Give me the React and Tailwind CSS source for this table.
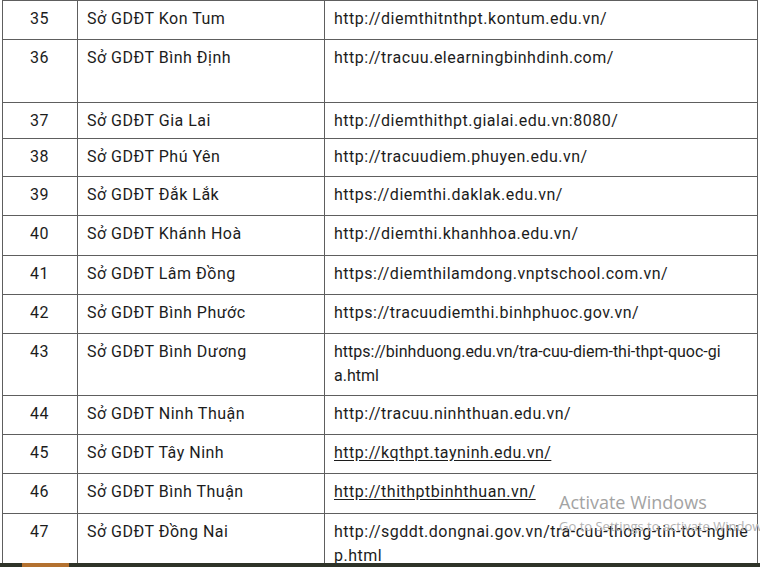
import React from "react";

const rows = [
  { n: "35", name: "Sở GDĐT Kon Tum", url: ["http://diemthitnthpt.kontum.edu.vn/"], h: "h-[39px]" },
  { n: "36", name: "Sở GDĐT Bình Định", url: ["http://tracuu.elearningbinhdinh.com/"], h: "h-[63px]" },
  { n: "37", name: "Sở GDĐT Gia Lai", url: ["http://diemthithpt.gialai.edu.vn:8080/"], h: "h-[36px]" },
  { n: "38", name: "Sở GDĐT Phú Yên", url: ["http://tracuudiem.phuyen.edu.vn/"], h: "h-[38px]" },
  { n: "39", name: "Sở GDĐT Đắk Lắk", url: ["https://diemthi.daklak.edu.vn/"], h: "h-[39px]" },
  { n: "40", name: "Sở GDĐT Khánh Hoà", url: ["http://diemthi.khanhhoa.edu.vn/"], h: "h-[40px]" },
  { n: "41", name: "Sở GDĐT Lâm Đồng", url: ["https://diemthilamdong.vnptschool.com.vn/"], h: "h-[39px]" },
  { n: "42", name: "Sở GDĐT Bình Phước", url: ["https://tracuudiemthi.binhphuoc.gov.vn/"], h: "h-[39px]" },
  { n: "43", name: "Sở GDĐT Bình Dương", url: ["https://binhduong.edu.vn/tra-cuu-diem-thi-thpt-quoc-gi", "a.html"], h: "h-[62px]", narrow: true },
  { n: "44", name: "Sở GDĐT Ninh Thuận", url: ["http://tracuu.ninhthuan.edu.vn/"], h: "h-[39px]" },
  { n: "45", name: "Sở GDĐT Tây Ninh", url: ["http://kqthpt.tayninh.edu.vn/"], h: "h-[39px]", link: true },
  { n: "46", name: "Sở GDĐT Bình Thuận", url: ["http://thithptbinhthuan.vn/"], h: "h-[40px]", link: true },
  { n: "47", name: "Sở GDĐT Đồng Nai", url: ["http://sgddt.dongnai.gov.vn/tra-cuu-thong-tin-tot-nghie", "p.html"], h: "h-[62px]" },
];

export default function App() {
  return (
    <div className="relative w-[760px] h-[567px] overflow-hidden bg-white text-[#1c1c1c] font-['Roboto',_'Liberation_Sans',_sans-serif] text-[16px] leading-[24px] tracking-[0.5px]">
      <div className="ml-[2px] w-[756px] border-l border-t border-[#5e5e5e]">
        {rows.map((r) => (
          <div key={r.n} className={`grid grid-cols-[75px_247px_433px] ${r.h}`}>
            <div className="border-r border-b border-[#5e5e5e] pt-[6px] text-center pr-[1px]">{r.n}</div>
            <div className="border-r border-b border-[#5e5e5e] pt-[6px] pl-[9px]">{r.name}</div>
            <div className={`border-r border-b border-[#5e5e5e] pt-[6px] pl-[9px] whitespace-nowrap ${r.narrow ? "tracking-normal" : ""}`}>
              {r.url.map((u, i) => (
                <div key={i} className={r.link ? "underline underline-offset-2" : ""}>{u}</div>
              ))}
            </div>
          </div>
        ))}
      </div>

      <div className="absolute left-[559px] top-[490px] text-[#a3a3a3] font-['Open_Sans',_'Noto_Sans',_sans-serif] whitespace-nowrap tracking-normal">
        <div className="text-[18px] leading-[24px]">Activate Windows</div>
        <div className="text-[13px] leading-[18px] mt-[3px] text-[#b2b2b2]">Go to Settings to activate Windows.</div>
      </div>

      <div className="absolute left-0 bottom-0 w-full h-[4px] bg-[#2e3328]">
        <div className="ml-[22px] w-[47px] h-full bg-[#b3712f]"></div>
      </div>
    </div>
  );
}
